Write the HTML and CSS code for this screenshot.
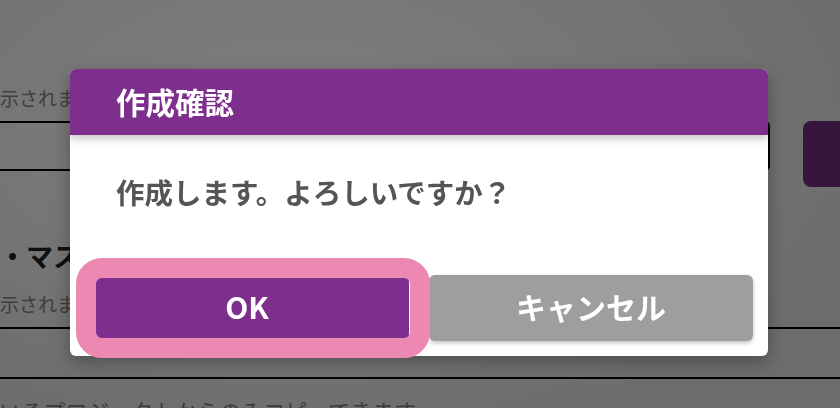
FILE: index.html
```html
<!DOCTYPE html>
<html lang="ja">
<head>
<meta charset="utf-8">
<link rel="stylesheet" href="styles.css">
</head>
<body>
<div class="page">
  <div class="content">
    <p class="hint hint-top">内容が表示されます</p>
    <div class="field-row">
      <div class="input short"></div>
      <div class="side-btn"></div>
    </div>
    <h3 class="section">設定・マスター</h3>
    <p class="hint hint-mid">内容が表示されます</p>
    <div class="input wide"></div>
    <p class="note">参加しているプロジェクトからのみコピーできます</p>
  </div>
</div>
<div class="overlay"></div>
<div class="dialog">
  <div class="dlg-head"><h2 class="dlg-title">作成確認</h2></div>
  <div class="dlg-body"><p class="dlg-msg">作成します。よろしいですか？</p></div>
  <div class="dlg-actions">
    <button class="btn btn-ok">OK</button>
    <button class="btn btn-cancel">キャンセル</button>
  </div>
</div>
<div class="highlight"></div>
</body>
</html>
```
FILE: styles.css
```css
html, body {
  margin: 0;
  padding: 0;
  width: 840px;
  height: 408px;
  overflow: hidden;
  font-family: "Noto Sans CJK JP", "Noto Sans", sans-serif;
}
.page {
  width: 840px;
  height: 408px;
  background: #fff;
  overflow: hidden;
}
.content {
  margin-left: -76px;
  padding-top: 85px;
  display: flex;
  flex-direction: column;
}
.hint {
  margin: 0;
  font-size: 19px;
  line-height: 26px;
  color: #888;
  white-space: nowrap;
}
.field-row {
  display: flex;
  align-items: flex-start;
  margin-top: 10px;
}
.input {
  box-sizing: border-box;
  border: 2px solid #000;
  border-radius: 5px;
  height: 50px;
  background: #fff;
  flex-shrink: 0;
}
.input.short {
  width: 846px;
}
.side-btn {
  flex-shrink: 0;
  margin-left: 33px;
  width: 120px;
  height: 66px;
  border-radius: 8px;
  background: #7c348a;
}
.section {
  margin: 52px 0 0 21px;
  font-size: 27px;
  line-height: 34px;
  font-weight: 700;
  color: #222;
  white-space: nowrap;
}
.hint-mid {
  margin-top: 18px;
}
.input.wide {
  width: 1000px;
  height: 52px;
  margin-top: 10px;
}
.note {
  margin: 16px 0 0 -12px;
  font-size: 22px;
  line-height: 30px;
  color: #888;
  white-space: nowrap;
}
.overlay {
  position: fixed;
  inset: 0;
  background:
    radial-gradient(ellipse 70% 80% at 35% 30%, rgba(0,0,0,0) 0%, rgba(0,0,0,0.14) 100%),
    rgba(0,0,0,0.5);
}
.dialog {
  position: absolute;
  left: 70px;
  top: 69px;
  width: 698px;
  height: 287px;
  background: #fff;
  border-radius: 6px;
  overflow: hidden;
  display: flex;
  flex-direction: column;
  box-shadow: 0 6px 18px rgba(0,0,0,0.3);
}
.dlg-head {
  height: 66px;
  background: #7e2f8e;
  display: flex;
  align-items: center;
  padding-left: 46px;
  box-shadow: 0 4px 8px rgba(0,0,0,0.22);
  position: relative;
  z-index: 1;
}
.dlg-title {
  margin: 0;
  color: #fff;
  font-size: 29.5px;
  font-weight: 700;
  line-height: 1;
}
.dlg-body {
  height: 140px;
  box-sizing: border-box;
  padding: 39px 0 0 46px;
}
.dlg-msg {
  margin: 0;
  font-size: 28.5px;
  line-height: 36px;
  font-weight: 700;
  color: #555;
}
.dlg-actions {
  display: flex;
  gap: 20px;
  padding: 0 15px 15px;
}
.btn {
  flex: 1;
  height: 66px;
  border: none;
  border-radius: 6px;
  color: #fff;
  font-family: "Noto Sans CJK JP", "Noto Sans", sans-serif;
  font-weight: 700;
  font-size: 30px;
  padding: 0 0 4px;
}
.btn-ok {
  background: #7e2f8e;
}
.btn-cancel {
  background: #9e9e9e;
  box-shadow: 0 2px 4px rgba(0,0,0,0.25);
}
.highlight {
  position: absolute;
  left: 76px;
  top: 258px;
  width: 354px;
  height: 100px;
  box-sizing: border-box;
  border: 20px solid #ec88b1;
  border-radius: 26px;
}
```
